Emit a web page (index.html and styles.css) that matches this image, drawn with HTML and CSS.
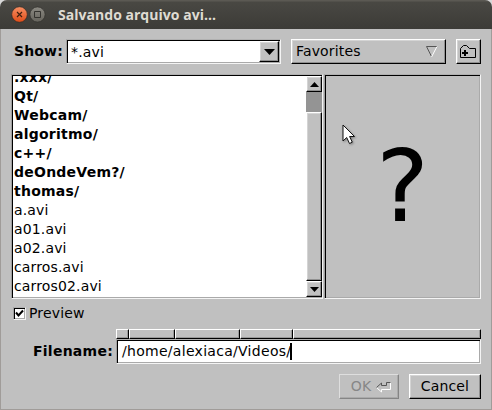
FILE: index.html
```html
<!DOCTYPE html>
<html lang="pt">
<head>
<meta charset="utf-8">
<title>Salvando arquivo avi...</title>
<link rel="stylesheet" href="styles.css">
</head>
<body>
<div class="window">
  <header class="titlebar">
    <svg class="controls" width="50" height="29" viewBox="0 0 50 29">
      <defs>
        <linearGradient id="close" x2="0" y2="1"><stop offset="0" stop-color="#f78f63"/><stop offset="1" stop-color="#df4c18"/></linearGradient>
        <linearGradient id="max" x2="0" y2="1"><stop offset="0" stop-color="#8b8982"/><stop offset="1" stop-color="#65635c"/></linearGradient>
      </defs>
      <circle cx="19.5" cy="14.5" r="7.8" fill="url(#close)" stroke="#2f2b27" stroke-width=".7"/>
      <path d="M17 12l5 5M22 12l-5 5" stroke="#41200f" stroke-width="1.2"/>
      <circle cx="37.5" cy="14.5" r="7.6" fill="url(#max)" stroke="#33322e" stroke-width=".7"/>
      <path d="M34.500 11.500h6v6h-6z" fill="none" stroke="#34332f"/>
    </svg>
    <h1 class="title">Salvando arquivo avi...</h1>
  </header>
  <main class="content">
    <div class="toolbar">
      <span class="label">Show:</span>
      <div class="choice sunken">
        <span class="choice-text">*.avi</span>
        <span class="drop raised"><svg width="11" height="6" viewBox="0 0 11 6"><path d="M0 0h11L5.500 6z"/></svg></span>
      </div>
      <div class="favorites raised">
        <span>Favorites</span>
        <svg width="12" height="12" viewBox="0 0 12 12"><path d="M11 .5H.5L5.500 10.500" stroke="#555" fill="none"/><path d="M5.500 11L11 .5" stroke="#fff" fill="none"/></svg>
      </div>
      <div class="new-folder raised">
        <svg width="17" height="15" viewBox="0 0 17 15"><path d="M.5 13.500V4.500L3.500 1.500H6.500L9.500 4.500H15.500V13.500Z" fill="none" stroke="#000"/><path d="M2 8h6v2H2zM4 6h2v6H4z"/></svg>
      </div>
    </div>
    <div class="panes">
      <div class="browser sunken">
        <ul class="files">
          <li class="dir">.xxx/</li>
          <li class="dir">Qt/</li>
          <li class="dir">Webcam/</li>
          <li class="dir">algoritmo/</li>
          <li class="dir">c++/</li>
          <li class="dir">deOndeVem?/</li>
          <li class="dir">thomas/</li>
          <li>a.avi</li>
          <li>a01.avi</li>
          <li>a02.avi</li>
          <li>carros.avi</li>
          <li>carros02.avi</li>
        </ul>
        <div class="scrollbar">
          <span class="arrow raised"><svg width="9" height="5" viewBox="0 0 9 5"><path d="M0 5h9L4.500 0z"/></svg></span>
          <span class="trough"></span>
          <span class="thumb raised"></span>
          <span class="arrow raised"><svg width="9" height="5" viewBox="0 0 9 5"><path d="M0 0h9L4.500 5z"/></svg></span>
        </div>
      </div>
      <div class="preview sunken"><span class="unknown">?</span></div>
    </div>
    <div class="check-row">
      <span class="checkbox sunken"><svg width="9" height="9" viewBox="0 0 9 9"><path d="M1 3.500L3.500 6.500L8 1.500" fill="none" stroke="#000" stroke-width="2"/></svg></span>
      <span>Preview</span>
    </div>
    <div class="filename-row">
      <span class="label">Filename:</span>
      <div class="path">
        <div class="crumbs"><i class="root"></i><i class="home"></i><i class="user"></i><i class="folder"></i><i class="rest"></i></div>
        <div class="filename sunken"><span>/home/alexiaca/Videos/</span><b class="caret"></b></div>
      </div>
    </div>
    <div class="actions">
      <div class="button ok"><span>OK</span>
        <svg width="16" height="12" viewBox="0 0 16 12"><path d="M.5 6.500L5.500 11V8.500H14.500V1.500" fill="none" stroke="#fff"/><path d="M.5 6.500L5.500 2V4.500H10.500V1.500H14.500" fill="none" stroke="#555"/></svg>
      </div>
      <div class="button cancel raised">Cancel</div>
    </div>
  </main>
  <svg class="pointer" width="14" height="21" viewBox="0 0 14 21"><path d="M1 1V17L4.700 13.500L7.500 19.500L10.300 18.200L7.600 12.500H12.500Z" fill="#fff" stroke="#111"/></svg>
</div>
</body>
</html>
```
FILE: styles.css
```css
* { box-sizing: border-box; }
body {
  margin: 0;
  background: #d8d8d8;
  color: #000;
  font: 14px/19px "DejaVu Sans", sans-serif;
  letter-spacing: .15px;
}
svg { display: block; flex: none; }
.window {
  position: relative;
  width: 492px;
  height: 410px;
  overflow: hidden;
  border-radius: 7px 7px 0 0;
  background: #c0c0c0;
}
.titlebar {
  display: flex;
  height: 29px;
  background: linear-gradient(#5b5953 0, #5b5953 1px, #494843 2px, #3c3b37 100%);
}
.title {
  margin: 0 0 0 8px;
  color: #dfdbd2;
  font: bold 14px/29px "Open Sans", sans-serif;
  letter-spacing: .03px;
  white-space: nowrap;
}
.content {
  height: 381px;
  padding: 10px 10px 0;
  border: solid #a09c99;
  border-width: 0 1px 1px;
}
.sunken {
  border: 1px solid;
  border-color: #b0b0b0 #f4f4f4 #f4f4f4 #a0a0a0;
  box-shadow: inset 1px 1px #000, inset -1px -1px #aaa;
}
.raised {
  border: 1px solid;
  border-color: #fff #000 #000 #fff;
  box-shadow: inset -1px -1px #909090, inset 1px 1px #d4d4d4;
  background: #c0c0c0;
}
.label { font-weight: bold; }
.toolbar { display: flex; height: 25px; line-height: 25px; }
.toolbar .label { width: 55px; padding-left: 3px; }
.choice {
  display: flex;
  justify-content: space-between;
  width: 215px;
  padding: 1px;
  background: #fff;
}
.choice-text { padding-left: 3px; line-height: 22px; }
.drop { display: flex; width: 20px; align-items: center; justify-content: center; }
.favorites {
  display: flex;
  width: 155px;
  margin-left: 10px;
  padding: 0 7px 0 4px;
  align-items: center;
  justify-content: space-between;
}
.new-folder {
  display: flex;
  width: 25px;
  margin-left: 10px;
  align-items: center;
  justify-content: center;
}
.panes { display: flex; gap: 1px; height: 225px; margin-top: 10px; }
.browser { display: flex; width: 312px; padding: 1px 0 1px 1px; background: #fff; }
.files {
  flex: 1;
  height: 221px;
  margin: 0;
  padding: 0 0 0 1px;
  overflow: hidden;
  list-style: none;
}
.files li:first-child { margin-top: -8px; }
.dir { font-weight: bold; letter-spacing: .24px; }
.scrollbar { display: flex; flex-direction: column; width: 16px; }
.arrow { display: flex; height: 16px; align-items: center; justify-content: center; }
.trough { height: 20px; background: #949494; }
.thumb { flex: 1; }
.preview {
  display: flex;
  width: 157px;
  align-items: center;
  justify-content: center;
}
.unknown { font-size: 100px; line-height: 100px; }
.check-row { display: flex; height: 19px; margin-top: 5px; gap: 3px; align-items: center; }
.checkbox {
  display: flex;
  width: 13px;
  height: 13px;
  margin-left: 2px;
  align-items: center;
  justify-content: center;
  background: #fff;
}
.filename-row { display: flex; height: 36px; margin-top: 6px; }
.filename-row .label { width: 105px; padding: 13px 3px 0 0; text-align: right; letter-spacing: .25px; }
.path { width: 365px; }
.crumbs { display: flex; height: 10px; }
.crumbs i {
  border: 1px solid;
  border-color: #fff #000 #000 #fff;
  box-shadow: inset -1px -1px #999;
}
.root { width: 13px; }
.home { width: 46px; }
.user { width: 65px; }
.folder { width: 53px; }
.rest { flex: 1; }
.filename {
  display: flex;
  height: 25px;
  padding-left: 5px;
  align-items: center;
  background: #fff;
  letter-spacing: .29px;
}
.caret { width: 2px; height: 17px; margin-left: -1px; background: #000; }
.actions { display: flex; height: 25px; margin-top: 9px; gap: 10px; justify-content: flex-end; }
.button { display: flex; align-items: center; justify-content: center; }
.ok {
  width: 60px;
  padding-left: 5px;
  gap: 5px;
  border: 1px solid;
  border-color: #dedede #858585 #858585 #dedede;
  box-shadow: inset -1px -1px #aaa;
  color: #878787;
}
.cancel { width: 72px; }
.pointer { position: absolute; left: 342px; top: 124px; filter: drop-shadow(1px 1px 1px #0005); }
```
